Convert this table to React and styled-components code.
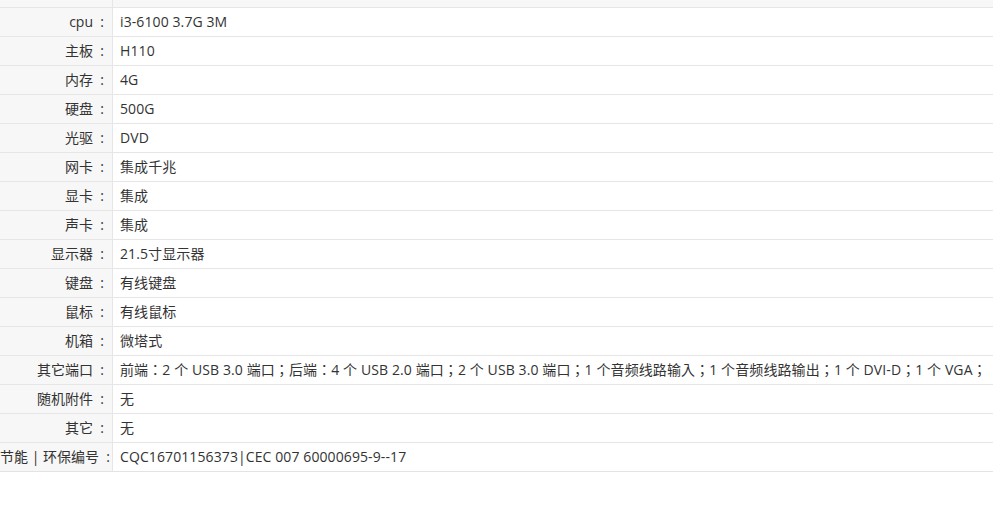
import React from 'react';
import styled, { createGlobalStyle } from 'styled-components';

const GlobalStyle = createGlobalStyle`
  html, body {
    margin: 0;
    padding: 0;
    background: #fff;
  }
  body {
    font-family: "Open Sans", "Noto Sans CJK TC", sans-serif;
    color: #333;
  }
`;

const specs = [
  ['cpu', 'i3-6100 3.7G 3M'],
  ['主板', 'H110'],
  ['内存', '4G'],
  ['硬盘', '500G'],
  ['光驱', 'DVD'],
  ['网卡', '集成千兆'],
  ['显卡', '集成'],
  ['声卡', '集成'],
  ['显示器', '21.5寸显示器'],
  ['键盘', '有线键盘'],
  ['鼠标', '有线鼠标'],
  ['机箱', '微塔式'],
  ['其它端口', '前端：2 个 USB 3.0 端口；后端：4 个 USB 2.0 端口；2 个 USB 3.0 端口；1 个音频线路输入；1 个音频线路输出；1 个 DVI-D；1 个 VGA；'],
  ['随机附件', '无'],
  ['其它', '无'],
  ['节能 | 环保编号', 'CQC16701156373|CEC 007 60000695-9--17'],
];

const Table = styled.div`
  width: 993px;
  border-bottom: 1px solid #e3e3e3;
  overflow: hidden;
`;

const Row = styled.div`
  display: grid;
  grid-template-columns: 113px 1fr;
  height: 28px;
  border-top: 1px solid #e6e6e6;
  background: ${p => (p.$head ? '#f7f7f7' : '#fff')};
  font-size: 14px;
  line-height: 27px;
  white-space: nowrap;
`;

const TopRow = styled(Row)`
  height: 7px;
  border-top: none;
`;

const Label = styled.div`
  background: #f7f7f7;
  border-right: 1px solid #e6e6e6;
  text-align: right;
  padding-right: 1px;
`;

const Colon = styled.span`
  display: inline-block;
  width: 18px;
  text-align: center;
`;

const Value = styled.div`
  padding-left: 7px;
  letter-spacing: 0.1px;
`;

export default function App() {
  return (
    <>
      <GlobalStyle />
      <Table>
        <TopRow $head>
          <Label />
          <Value />
        </TopRow>
        {specs.map(([k, v]) => (
          <Row key={k}>
            <Label>
              {k}
              <Colon>:</Colon>
            </Label>
            <Value>{v}</Value>
          </Row>
        ))}
      </Table>
    </>
  );
}
